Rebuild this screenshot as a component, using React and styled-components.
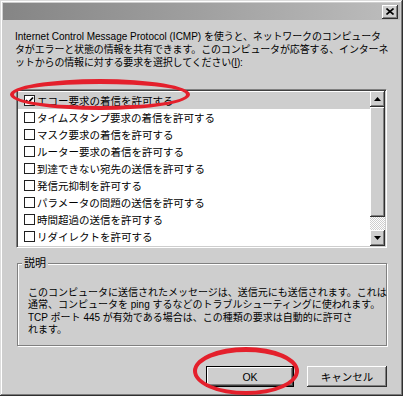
import React from "react";
import styled, { createGlobalStyle } from "styled-components";

const Global = createGlobalStyle`
  html, body { margin: 0; padding: 0; background: #cecece; }
  body { width: 403px; height: 396px; overflow: hidden; }
  * { box-sizing: border-box; }
`;

const FONT = `"Liberation Sans", "Noto Sans CJK JP", sans-serif`;

const Window = styled.div`
  position: relative;
  width: 403px;
  height: 396px;
  padding: 3px;
  background: #cecece;
  font-family: ${FONT};
  color: #000;
  box-shadow: inset -1px -1px #303030, inset 1px 1px #dcdcdc,
    inset -2px -2px #7c7c7c, inset 2px 2px #ffffff;
  display: flex;
  flex-direction: column;
`;

const TitleBar = styled.div`
  height: 17px;
  background: linear-gradient(90deg, #858585 0%, #a0a0a0 50%, #bdbdbd 100%);
  display: flex;
  align-items: center;
  justify-content: flex-end;
  padding-right: 2px;
`;

const CloseButton = styled.div`
  width: 16px;
  height: 14px;
  background: #cecece;
  box-shadow: inset -1px -1px #303030, inset 1px 1px #ffffff,
    inset -2px -2px #808080;
  display: flex;
  align-items: center;
  justify-content: center;
`;

const Body = styled.div`
  flex: 1;
  display: flex;
  flex-direction: column;
  padding: 10px 13px 0 12px;
`;

const Intro = styled.div`
  font-size: 10px;
  line-height: 13px;
  letter-spacing: -0.15px;
  white-space: nowrap;
`;

const En = styled.span`
  letter-spacing: 0;
`;

const ListBox = styled.div`
  margin: 20px 0 0 1px;
  height: 159px;
  display: flex;
  background: #fff;
  border-style: solid;
  border-width: 1px;
  border-color: #808080 #ffffff #ffffff #808080;
  box-shadow: inset 1px 1px #404040, inset -1px -1px #cecece;
  padding: 1px;
`;

const Rows = styled.div`
  flex: 1;
  padding-top: 1px;
  display: flex;
  flex-direction: column;
`;

const Row = styled.div`
  height: 17px;
  display: flex;
  align-items: center;
  padding-left: 6px;
  gap: 2px;
  font-size: 10.5px;
  white-space: nowrap;
  background: ${(p) => (p.$selected ? "#cecece" : "transparent")};
`;

const Box = styled.div`
  width: 11px;
  height: 11px;
  border: 1px solid #202020;
  background: #fff;
  display: flex;
  align-items: center;
  justify-content: center;
  flex: none;
`;

const Scrollbar = styled.div`
  width: 15px;
  display: flex;
  flex-direction: column;
`;

const ScrollButton = styled.div`
  height: 16px;
  background: #cecece;
  box-shadow: inset -1px -1px #303030, inset 1px 1px #ffffff,
    inset -2px -2px #808080;
  display: flex;
  align-items: center;
  justify-content: center;
`;

const Thumb = styled.div`
  height: 110px;
  background: #cecece;
  box-shadow: inset -1px -1px #303030, inset 1px 1px #ffffff,
    inset -2px -2px #808080;
`;

const Track = styled.div`
  flex: 1;
  background-color: #ffffff;
  background-image: linear-gradient(45deg, #cecece 25%, transparent 25%, transparent 75%, #cecece 75%),
    linear-gradient(45deg, #cecece 25%, transparent 25%, transparent 75%, #cecece 75%);
  background-size: 2px 2px;
  background-position: 0 0, 1px 1px;
`;

const Group = styled.div`
  position: relative;
  margin: 15px 0 0 2px;
  height: 83px;
  border: 1px solid #808080;
  box-shadow: 1px 1px #ffffff, inset 1px 1px #ffffff;
  padding: 23px 10px 0 10px;
`;

const Legend = styled.span`
  position: absolute;
  top: -8px;
  left: 4px;
  padding: 0 2px;
  background: #cecece;
  font-size: 11px;
  line-height: 14px;
`;

const Desc = styled.div`
  font-size: 10px;
  line-height: 12.4px;
  letter-spacing: 0;
  white-space: nowrap;
`;

const Buttons = styled.div`
  margin-top: 20px;
  display: flex;
  justify-content: flex-end;
  gap: 13px;
`;

const Button = styled.div`
  width: ${(p) => (p.$default ? "88px" : "80px")};
  height: 21px;
  background: #cecece;
  font-size: 10.5px;
  display: flex;
  align-items: center;
  justify-content: center;
  box-shadow: ${(p) =>
    p.$default
      ? "inset 0 0 0 1px #000, inset -2px -2px #404040, inset 2px 2px #ffffff, inset -3px -3px #808080"
      : "inset -1px -1px #303030, inset 1px 1px #ffffff, inset -2px -2px #808080"};
`;

const Ring = styled.div`
  position: absolute;
  left: ${(p) => p.$x}px;
  top: ${(p) => p.$y}px;
  width: ${(p) => p.$w}px;
  height: ${(p) => p.$h}px;
  border: 4px solid #e4202c;
  border-top-width: 5px;
  border-radius: 50%;
  pointer-events: none;
`;

const items = [
  "エコー要求の着信を許可する",
  "タイムスタンプ要求の着信を許可する",
  "マスク要求の着信を許可する",
  "ルーター要求の着信を許可する",
  "到達できない宛先の送信を許可する",
  "発信元抑制を許可する",
  "パラメータの問題の送信を許可する",
  "時間超過の送信を許可する",
  "リダイレクトを許可する",
];

const Check = () => (
  <svg width="9" height="9" viewBox="0 0 9 9">
    <path d="M1 4 L3.3 6.5 L8 1.5" fill="none" stroke="#000" strokeWidth="1.8" />
  </svg>
);

const Arrow = ({ up }) => (
  <svg width="7" height="4" viewBox="0 0 7 4">
    <path d={up ? "M0 4 L3.5 0 L7 4 Z" : "M0 0 L3.5 4 L7 0 Z"} fill="#000" />
  </svg>
);

export default function App() {
  return (
    <>
      <Global />
      <Window>
        <TitleBar>
          <CloseButton>
            <svg width="8" height="7" viewBox="0 0 8 7">
              <path d="M0.5 0.5 L7.5 6.5 M7.5 0.5 L0.5 6.5" stroke="#000" strokeWidth="1.6" />
            </svg>
          </CloseButton>
        </TitleBar>
        <Body>
          <Intro>
            <div>
              <En>Internet Control Message Protocol (ICMP) </En>を使うと、ネットワークのコンピュータ
            </div>
            <div>タがエラーと状態の情報を共有できます。このコンピュータが応答する、インターネ</div>
            <div>ットからの情報に対する要求を選択してください(<u>I</u>):</div>
          </Intro>
          <ListBox>
            <Rows>
              {items.map((t, i) => (
                <Row key={t} $selected={i === 0}>
                  <Box>{i === 0 && <Check />}</Box>
                  <span>{t}</span>
                </Row>
              ))}
            </Rows>
            <Scrollbar>
              <ScrollButton>
                <Arrow up />
              </ScrollButton>
              <Thumb />
              <Track />
              <ScrollButton>
                <Arrow />
              </ScrollButton>
            </Scrollbar>
          </ListBox>
          <Group>
            <Legend>説明</Legend>
            <Desc>
              <div>このコンピュータに送信されたメッセージは、送信元にも送信されます。これは</div>
              <div>
                通常、コンピュータを <En>ping</En> するなどのトラブルシューティングに使われます。
              </div>
              <div>
                <En>TCP</En> ポート <En>445</En> が有効である場合は、この種類の要求は自動的に許可さ
              </div>
              <div>れます。</div>
            </Desc>
          </Group>
          <Buttons>
            <Button $default>OK</Button>
            <Button>キャンセル</Button>
          </Buttons>
        </Body>
        <Ring $x={10} $y={79} $w={180} $h={31} />
        <Ring $x={193} $y={347} $w={106} $h={48} />
      </Window>
    </>
  );
}
